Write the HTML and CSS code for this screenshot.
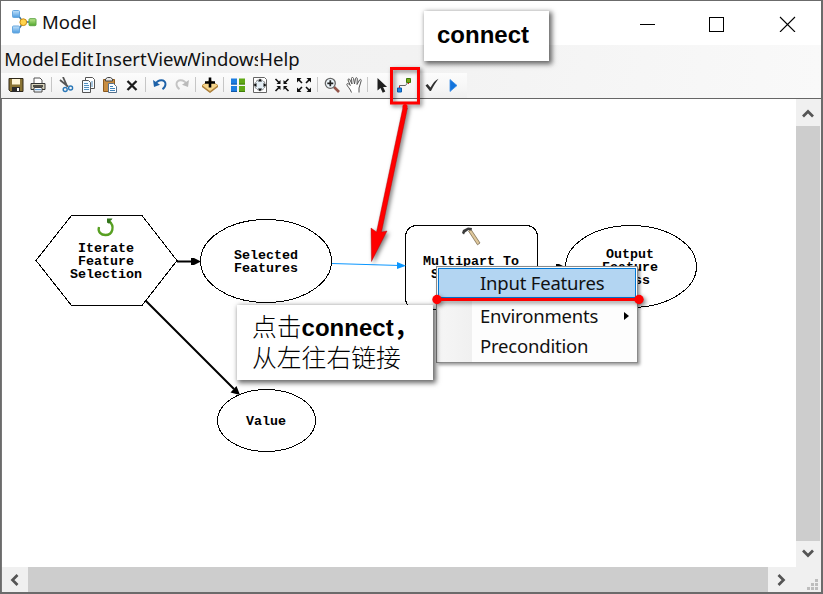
FILE: index.html
```html
<!DOCTYPE html>
<html lang="zh-CN">
<head>
<meta charset="utf-8">
<title>Model</title>
<link rel="stylesheet" href="styles.css">
</head>
<body>
<div class="window">
  <header class="titlebar">
    <svg class="app-icon" width="26" height="26" viewBox="0 0 26 26">
      <defs>
        <linearGradient id="blue" x2="0" y2="1"><stop stop-color="#c4e2fa"/><stop offset="1" stop-color="#4a9be0"/></linearGradient>
        <linearGradient id="green" x2="0" y2="1"><stop stop-color="#bfe88f"/><stop offset="1" stop-color="#4fa52c"/></linearGradient>
      </defs>
      <path d="M7 5l5 7h10M7 20l5-7" fill="none" stroke="#3c6f96" stroke-width="1.4"/>
      <rect x="1.5" y=".5" width="7" height="7" rx="1" fill="url(#blue)" stroke="#67a7de"/>
      <rect x="1.5" y="16" width="7" height="7" rx="1" fill="url(#blue)" stroke="#67a7de"/>
      <circle cx="12.3" cy="12.2" r="3.4" fill="#ffd44d" stroke="#c98a12"/>
      <rect x="18" y="8.7" width="7" height="7" rx="1" fill="url(#green)" stroke="#5ea645"/>
    </svg>
    <span class="title">Model</span>
    <svg class="caption-buttons" width="160" height="20" viewBox="0 0 160 20" fill="none" stroke="#000">
      <path d="M0 12.5h15M69.500 5.500h14v14h-14z" shape-rendering="crispEdges"/>
      <path d="M140 5l15 15M155 5l-15 15" stroke-width="1.1"/>
    </svg>
  </header>
  <nav class="menubar">
    <span class="m-model">Model</span><span class="m-edit">Edit</span><span class="m-insert">Insert</span><span class="m-view">View</span><span class="m-windows">Windows</span><span class="m-help">Help</span>
  </nav>
  <div class="toolbar">
    <div class="tools">
      <svg class="tool" viewBox="0 0 16 16"><path d="M1 1.500h14v13H2.500L1 13z" fill="#8a7434" stroke="#30291a"/><path d="M4 2h8v5.500H4z" fill="#fff6d8"/><path d="M4 10h8v5H4z" fill="#2b2b2b"/><path d="M9 11h2v3H9z" fill="#fff"/></svg>
      <svg class="tool" viewBox="0 0 16 16"><path d="M4 6V1h6l2 2v3" fill="#fff" stroke="#555"/><path d="M1 6.500h14v6H1z" fill="#d8d4bd" stroke="#333"/><path d="M3 9h10" stroke="#222" stroke-width="1.500"/><path d="M4 10.500h8v4.500H4z" fill="#fff" stroke="#444"/><path d="M5 12.700h6" stroke="#3c86c5"/></svg>
      <i class="sep"></i>
      <svg class="tool" viewBox="0 0 16 16" fill="none"><path d="M5 0l4.500 10M2 3l8 6.500" stroke="#555" stroke-width="1.800"/><circle cx="7.200" cy="12.500" r="2" stroke="#2b78b8" stroke-width="1.400"/><circle cx="12.600" cy="11" r="2" stroke="#2b78b8" stroke-width="1.400"/></svg>
      <svg class="tool" viewBox="0 0 16 16"><path d="M5.500.500h7l2 2v9h-9z" fill="#fff" stroke="#555"/><path d="M2.500 3.500h6l2 2v10h-8z" fill="#f4faff" stroke="#555"/><path d="M4 6.500h4M4 8.500h5M4 10.500h5M4 12.500h5M12 4v6" stroke="#3f83b9" stroke-width=".9"/></svg>
      <svg class="tool" viewBox="0 0 16 16"><path d="M1.500 2.500h11v12h-11z" fill="#c98e42" stroke="#8c5a1e"/><path d="M3.500 4V2l2-1.500h3L10.500 2v2z" fill="#e8e8e8" stroke="#444"/><path d="M6.500 6.500h5l3 3v6h-8z" fill="#fff" stroke="#55708c"/><path d="M8 9.500h3M8 11.500h5M8 13.500h5" stroke="#3f83b9"/></svg>
      <svg class="tool" viewBox="0 0 16 16"><path d="M3.500 4l9 9M12.500 4l-9 9" stroke="#1c1c1c" stroke-width="2.300"/></svg>
      <i class="sep"></i>
      <svg class="tool" viewBox="0 0 16 16"><path d="M3 7.500C6 2 13.500 2 13.500 7c0 2-1 3.800-3 5.300" fill="none" stroke="#1f62a8" stroke-width="1.900"/><path d="M1 3l1 7 6-2.200z" fill="#1f62a8"/></svg>
      <svg class="tool" viewBox="0 0 16 16"><path d="M13 7.500C10 2 2.500 2 2.500 7c0 2 1 3.800 3 5.300" fill="none" stroke="#c4c4c4" stroke-width="1.900"/><path d="M15 3l-1 7-6-2.200z" fill="#bababa"/></svg>
      <i class="sep"></i>
      <svg class="tool" viewBox="0 0 16 16"><path d="M8 3l8 5.500-8 6-8-6z" fill="#f6d58a" stroke="#b98a3c" stroke-width=".8"/><path d="M0 8.500l8 6 8-6v1.500L8 16 0 10z" fill="#a97a34"/><path d="M8 .500v10M3 5.500h10" stroke="#000" stroke-width="2.600"/></svg>
      <i class="sep"></i>
      <svg class="tool" viewBox="0 0 16 16"><path d="M1 1.500h6v6H1zM1 9h6v6H1z" fill="#1c7de0"/><path d="M9 1.500h6v6H9zM9 9h6v6H9z" fill="#61a916"/><path d="M1 7h6M1 14.500h6" stroke="#1257a8"/><path d="M9 7h6M9 14.500h6" stroke="#3f7d0a"/></svg>
      <svg class="tool" viewBox="0 0 16 16"><path d="M1.500.500h11l2 2v13h-13z" fill="#fff" stroke="#666"/><circle cx="8" cy="8" r="5.300" fill="#e4eef5" stroke="#777" stroke-dasharray="3 1"/><path d="M8 1.500l2 3H6zM8 14.500l2-3H6zM1.500 8l3-2v4zM14.500 8l-3-2v4z" fill="#111"/></svg>
      <svg class="tool" viewBox="0 0 16 16"><path d="M1.500 2l3.500 3.500M14.500 2L11 5.500M1.500 14L5 10.500M14.500 14L11 10.500" stroke="#111" stroke-width="1.600"/><path d="M6.500 3v4h-4zM9.500 3v4h4zM6.500 13V9h-4zM9.500 13V9h4z" fill="#111"/></svg>
      <svg class="tool" viewBox="0 0 16 16"><path d="M2.500 2.500L6 6M13.500 2.500L10 6M2.500 13.500L6 10M13.500 13.500L10 10" stroke="#111" stroke-width="1.600"/><path d="M1 1h4.500L1 5.500zM15 1h-4.500L15 5.500zM1 15h4.500L1 10.500zM15 15h-4.500L15 10.500z" fill="#111"/></svg>
      <i class="sep"></i>
      <svg class="tool" viewBox="0 0 16 16"><path d="M10 10l5 5" stroke="#925449" stroke-width="2.600"/><circle cx="6.300" cy="6.300" r="5" fill="#eef7fc" stroke="#666" stroke-width="1.300"/><path d="M6.300 3.300v6M3.300 6.300h6" stroke="#222" stroke-width="1.700"/></svg>
      <svg class="tool" viewBox="0 0 16 16"><path d="M5.500 15.500C4.500 12 1 9 .800 7.500c0-1.500 2-1 3.500 1L2 3c0-1.500 1.500-1.500 2 0l2 4L5.500 1.500c0-1.500 1.700-1.500 2 0L8.500 7 9.500 1.500c.300-1.200 1.800-1 1.800.300L11 7.500 13.500 3c.800-1.200 2-.500 1.700.700L13 11v4.500" fill="#fff" stroke="#555"/></svg>
      <i class="sep"></i>
      <svg class="tool" viewBox="0 0 16 16"><path d="M3.500 1v12.500l3-2.500 2.200 4.800 2.600-1.300-2.200-4.500h4z" fill="#1f1f1f"/></svg>
      <svg class="tool" viewBox="0 0 16 16"><path d="M3.500 11V8.500h6l3-4" fill="none" stroke="#666"/><path d="M3.500 9v2M12.500 5v2" stroke="#e11"/><path d="M1.500 11h4v4h-4z" fill="#1c86e8" stroke="#0b5cae"/><path d="M10.500 1.500h4v4h-4z" fill="#7aa915" stroke="#3d7a0a"/></svg>
      <svg class="tool tool-check" viewBox="0 0 16 16"><path d="M1.500 8.500l2-1.500 3 3.500C9 6 11 3.500 14.500 1.800 11.500 6 9.500 9 7 14H5.800z" fill="#303030"/></svg>
      <svg class="tool" viewBox="0 0 16 16"><path d="M4 2.500l7 6-7 6z" fill="#1374dc" stroke="#3c8ee6" stroke-width=".8"/></svg>
    </div>
  </div>
  <main class="workspace">
    <div class="canvas"></div>
    <div class="scroll-v">
      <svg class="chev" viewBox="0 0 12 12"><path d="M1 8.500l5-5 5 5"/></svg>
      <div class="thumb"></div>
      <svg class="chev" viewBox="0 0 12 12"><path d="M1 3.500l5 5 5-5"/></svg>
    </div>
    <div class="scroll-h">
      <svg class="chev" viewBox="0 0 12 12"><path d="M8.500 1l-5 5 5 5"/></svg>
      <div class="thumb"></div>
      <svg class="chev" viewBox="0 0 12 12"><path d="M3.500 1l5 5-5 5"/></svg>
    </div>
    <svg class="grip" width="24" height="25" viewBox="0 0 24 25"><path d="M19 12h3v3h-3zM15 16h3v3h-3zM19 16h3v3h-3zM11 20h3v3h-3zM15 20h3v3h-3zM19 20h3v3h-3z" fill="#bdbdbd"/></svg>
  </main>

  <svg class="diagram" width="823" height="594" viewBox="0 0 823 594">
    <g class="outline">
      <path d="M36 260.500L71.500 215.500H142L177 260.500L142 305.500H71.500Z"/>
      <ellipse cx="266" cy="261" rx="65.500" ry="41.500"/>
      <rect x="405.500" y="225.500" width="132" height="84" rx="11"/>
      <ellipse cx="631" cy="266.500" rx="65.500" ry="41"/>
      <ellipse cx="266.500" cy="420.500" rx="49" ry="31"/>
    </g>
    <path d="M177 261.500H194M146 301L234 389M556 266.500H560" fill="none" stroke="#000" stroke-width="2"/>
    <path d="M191 258h3l7 3.500-7 3.500h-3zM240 395l-9.500-2.500 6-6.500zM556 264h3l6 3-6 3h-3z"/>
    <path d="M332 263.500L400 265.500" stroke="#0a96ff" stroke-width="1.200"/>
    <path d="M397 262l9 3.700-9 3.300z" fill="#0a96ff"/>
    <path d="M99 227c-1.500 5 2 8 6.500 8 7.500 0 9.500-9 3.500-14" fill="none" stroke="#58a022" stroke-width="2.300"/>
    <path d="M107 218.500h5.500l-1 1.500-1.500 1 .5 2-2 .5-1.500-1z" fill="#32751b"/>
    <path d="M468.500 231l2.500-1.500 9 13.500-2.500 1.800z" fill="#dfc89c" stroke="#6c5c40" stroke-width=".7"/>
    <path d="M462 233l1-3 5-2.500 4 .5-.5 2.500-3-.5-3.500 2.500-1 2z" fill="#3b3b3b"/>
    <g class="node-label">
      <text x="106" y="252">Iterate</text><text x="106" y="265">Feature</text><text x="106" y="278">Selection</text>
      <text x="266" y="259">Selected</text><text x="266" y="272">Features</text>
      <text x="471" y="265">Multipart To</text><text x="471" y="278">Singlepart</text>
      <text x="630" y="258">Output</text><text x="630" y="271">Feature</text><text x="630" y="284">Class</text>
      <text x="266" y="425">Value</text>
    </g>
  </svg>

  <div class="context-menu">
    <div class="menu-item active">Input Features</div>
    <div class="menu-item">Environments<span class="submenu"></span></div>
    <div class="menu-item">Precondition</div>
  </div>
  <div class="callout callout-tool">connect</div>
  <div class="callout callout-note"><div>点击<b>connect</b><span class="comma">，</span></div><div>从左往右链接</div></div>
  <svg class="marks" width="823" height="594" viewBox="0 0 823 594">
    <rect x="391.500" y="68.500" width="27" height="34.500" fill="none" stroke="#f00" stroke-width="3"/>
    <path d="M403 107l4.500 1L381.500 232l5.500-1-15.500 30.500L371 228l5.500 4z" fill="#f00" stroke="#a00" stroke-width=".4"/>
    <circle cx="405" cy="106.500" r="2.500" fill="#f00"/>
    <path d="M437 299.500h202" stroke="#f00" stroke-width="3"/>
    <circle cx="437" cy="299.500" r="4.700" fill="#f00"/><circle cx="639" cy="299.500" r="4.700" fill="#f00"/>
  </svg>
</div>
</body>
</html>
```
FILE: styles.css
```css
* { box-sizing: border-box; }
body { margin: 0; overflow: hidden; }

.window {
  position: relative;
  width: 823px;
  height: 594px;
  display: flex;
  flex-direction: column;
  background: #fff;
  border: 1px solid #6b6b6b;
  border-right-width: 2px;
  border-bottom-width: 2px;
  font: 18.500px "Noto Sans", "Open Sans", sans-serif;
  color: #111;
}

.titlebar {
  height: 44px;
  display: flex;
  align-items: center;
  padding-left: 10px;
}
.app-icon { margin-top: -1px; }
.title { margin: -4px 0 0 5px; }
.caption-buttons { margin: 0 21px 3px auto; }

.menubar {
  height: 28px;
  display: flex;
  align-items: center;
  padding-left: 3px;
  line-height: 28px;
  background: linear-gradient(90deg, #f0f0f0, #f2f2f2 50%, #f9f9f9);
}
.menubar span {
  display: flex;
  justify-content: center;
  overflow: hidden;
  white-space: nowrap;
}
.m-model { width: 55px; }
.m-edit { width: 36px; }
.m-insert { width: 52px; }
.m-view { width: 41px; }
.m-windows { width: 70px; }
.m-help { width: 43px; }

.toolbar {
  height: 26px;
  background: linear-gradient(90deg, #f2f2f2, #f3f3f3 56%, #f9f9f9);
  border-bottom: 1px solid #666;
}
.tools {
  width: 466px;
  height: 25px;
  display: flex;
  align-items: center;
  gap: 6px;
  padding: 0 0 2px 7px;
  background: linear-gradient(#fcfcfc, #f6f6f6 60%, #efefef);
}
.tool { width: 16px; height: 16px; flex: none; }
.tool-check { margin-left: 6px; }
.sep { width: 1px; height: 15px; margin-left: -1px; background: #c6c6c6; flex: none; }

.workspace {
  flex: 1;
  display: grid;
  grid-template-columns: 1fr 25px;
  grid-template-rows: 1fr 25px;
  border-left: 1px solid #777;
  background: #f0f0f0;
}
.canvas { background: #fff; }
.scroll-v, .scroll-h { display: flex; align-items: center; }
.scroll-v { flex-direction: column; padding: 9px 1px 8px 0; gap: 6px; }
.scroll-h { padding: 0 9px 0 7px; gap: 7px; }
.thumb { flex: 1; align-self: stretch; background: #cdcdcd; }
.chev { width: 12px; height: 12px; flex: none; fill: none; stroke: #555; stroke-width: 2.700; }

.diagram, .marks { position: absolute; left: -1px; top: -1px; }
.outline { fill: #fff; stroke: #000; stroke-width: 1; shape-rendering: crispEdges; }
.node-label {
  font: bold 13.330px "Liberation Mono", monospace;
  text-anchor: middle;
  fill: #000;
}

.context-menu {
  position: absolute;
  left: 435px;
  top: 265px;
  width: 202px;
  height: 97px;
  padding: 1px;
  border: 1px solid #8a8a8a;
  background: linear-gradient(90deg, #f6f6f6, #f0f0f0 35px, #fdfdfd 35px);
  box-shadow: 2px 2px 3px rgba(0, 0, 0, .4);
  letter-spacing: -.2px;
}
.menu-item {
  position: relative;
  height: 30px;
  padding-left: 42px;
  line-height: 30px;
  white-space: nowrap;
}
.menu-item.active {
  margin-bottom: 3px;
  padding-left: 41px;
  line-height: 28px;
  border: 1px solid #0078d7;
  background: #b3d5f2;
}
.submenu {
  position: absolute;
  right: 7px;
  top: 11px;
  border: 4px solid transparent;
  border-left: 5px solid #000;
  border-right: 0;
}

.callout {
  position: absolute;
  background: #fff;
  box-shadow: 2px 2px 5px 1px rgba(0, 0, 0, .6);
  color: #000;
}
.callout-tool {
  left: 423px;
  top: 10px;
  width: 125px;
  height: 50px;
  padding-left: 13px;
  font: bold 24px/47px "Liberation Sans", sans-serif;
}
.callout-note {
  left: 236px;
  top: 304px;
  width: 196px;
  height: 75px;
  padding: 6px 0 0 15px;
  font: 300 24.800px/29px "Noto Sans CJK SC", sans-serif;
  white-space: nowrap;
}
.callout-note b { font: bold 24px/29px "Liberation Sans", sans-serif; }
.comma { font-weight: 700; }
.marks { filter: drop-shadow(2px 2px 2px rgba(0, 0, 0, .5)); }
```
